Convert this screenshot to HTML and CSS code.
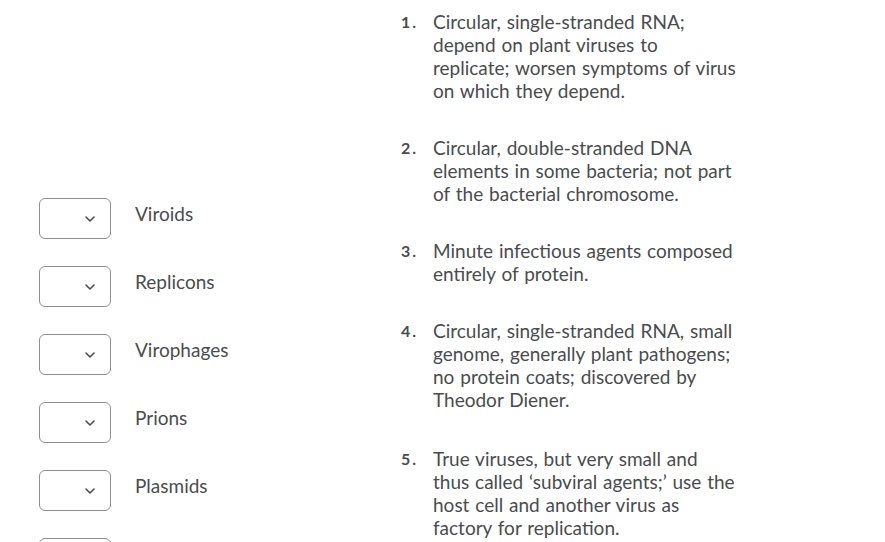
FILE: index.html
```html
<!DOCTYPE html>
<html lang="en">

<head>
    <meta charset="UTF-8" />
    <meta name="viewport" content="width=device-width, initial-scale=1.0" />
    <title>Matching Question</title>
    <link rel="stylesheet" href="styles.css">
</head>

<body>
    <div class="matching">
        <!-- Terms with answer dropdowns -->
        <div class="choices">
            <div class="choice">
                <div class="picker"><svg class="chevron" width="10" height="6" viewBox="0 0 10 6"><polyline points="1,1 5,5 9,1" /></svg></div>
                <span class="term">Viroids</span>
            </div>
            <div class="choice">
                <div class="picker"><svg class="chevron" width="10" height="6" viewBox="0 0 10 6"><polyline points="1,1 5,5 9,1" /></svg></div>
                <span class="term">Replicons</span>
            </div>
            <div class="choice">
                <div class="picker"><svg class="chevron" width="10" height="6" viewBox="0 0 10 6"><polyline points="1,1 5,5 9,1" /></svg></div>
                <span class="term">Virophages</span>
            </div>
            <div class="choice">
                <div class="picker"><svg class="chevron" width="10" height="6" viewBox="0 0 10 6"><polyline points="1,1 5,5 9,1" /></svg></div>
                <span class="term">Prions</span>
            </div>
            <div class="choice">
                <div class="picker"><svg class="chevron" width="10" height="6" viewBox="0 0 10 6"><polyline points="1,1 5,5 9,1" /></svg></div>
                <span class="term">Plasmids</span>
            </div>
            <div class="choice">
                <div class="picker"><svg class="chevron" width="10" height="6" viewBox="0 0 10 6"><polyline points="1,1 5,5 9,1" /></svg></div>
            </div>
        </div>

        <ol class="definitions">
            <li><span class="num">1.</span><span class="def">Circular, single-stranded RNA;<br>depend on plant viruses to<br>replicate; worsen symptoms of virus<br>on which they depend.</span></li>
            <li><span class="num">2.</span><span class="def">Circular, double-stranded DNA<br>elements in some bacteria; not part<br>of the bacterial chromosome.</span></li>
            <li><span class="num">3.</span><span class="def">Minute infectious agents composed<br>entirely of protein.</span></li>
            <li><span class="num">4.</span><span class="def">Circular, single-stranded RNA, small<br>genome, generally plant pathogens;<br>no protein coats; discovered by<br>Theodor Diener.</span></li>
            <li class="last"><span class="num">5.</span><span class="def">True viruses, but very small and<br>thus called ‘subviral agents;’ use the<br>host cell and another virus as<br>factory for replication.</span></li>
        </ol>
    </div>
</body>

</html>
```

FILE: styles.css
```css
body {
    font-family: Lato, "Open Sans", sans-serif;
    background-color: #fff;
    color: #494c4e;
    margin: 0;
    overflow: hidden;
}

.matching {
    display: flex;
    align-items: flex-start;
}

.choices {
    width: 362px;
    padding: 198px 0 0 39px;
    display: flex;
    flex-direction: column;
    gap: 27px;
}

.choice {
    display: flex;
    align-items: flex-start;
    gap: 24px;
}

.picker {
    width: 72px;
    height: 41px;
    box-sizing: border-box;
    border: 1px solid #8a8f92;
    border-radius: 6px;
    display: flex;
    align-items: center;
    justify-content: flex-end;
    padding-right: 15px;
}

.chevron polyline {
    fill: none;
    stroke: #494c4e;
    stroke-width: 1.6;
    stroke-linecap: round;
    stroke-linejoin: round;
}

.term {
    font-size: 19px;
    line-height: 23px;
    padding-top: 4px;
}

.definitions {
    list-style: none;
    margin: 0;
    padding: 10px 0 0 0;
    display: flex;
    flex-direction: column;
    gap: 34px;
}

.definitions li {
    display: flex;
    font-size: 19px;
    line-height: 23px;
}

.definitions li.last {
    margin-top: 2px;
}

.num {
    width: 32px;
    flex-shrink: 0;
    font-size: 16px;
    font-weight: bold;
    letter-spacing: 2px;
}

.def {
    width: 340px;
    word-spacing: 1px;
}
```
